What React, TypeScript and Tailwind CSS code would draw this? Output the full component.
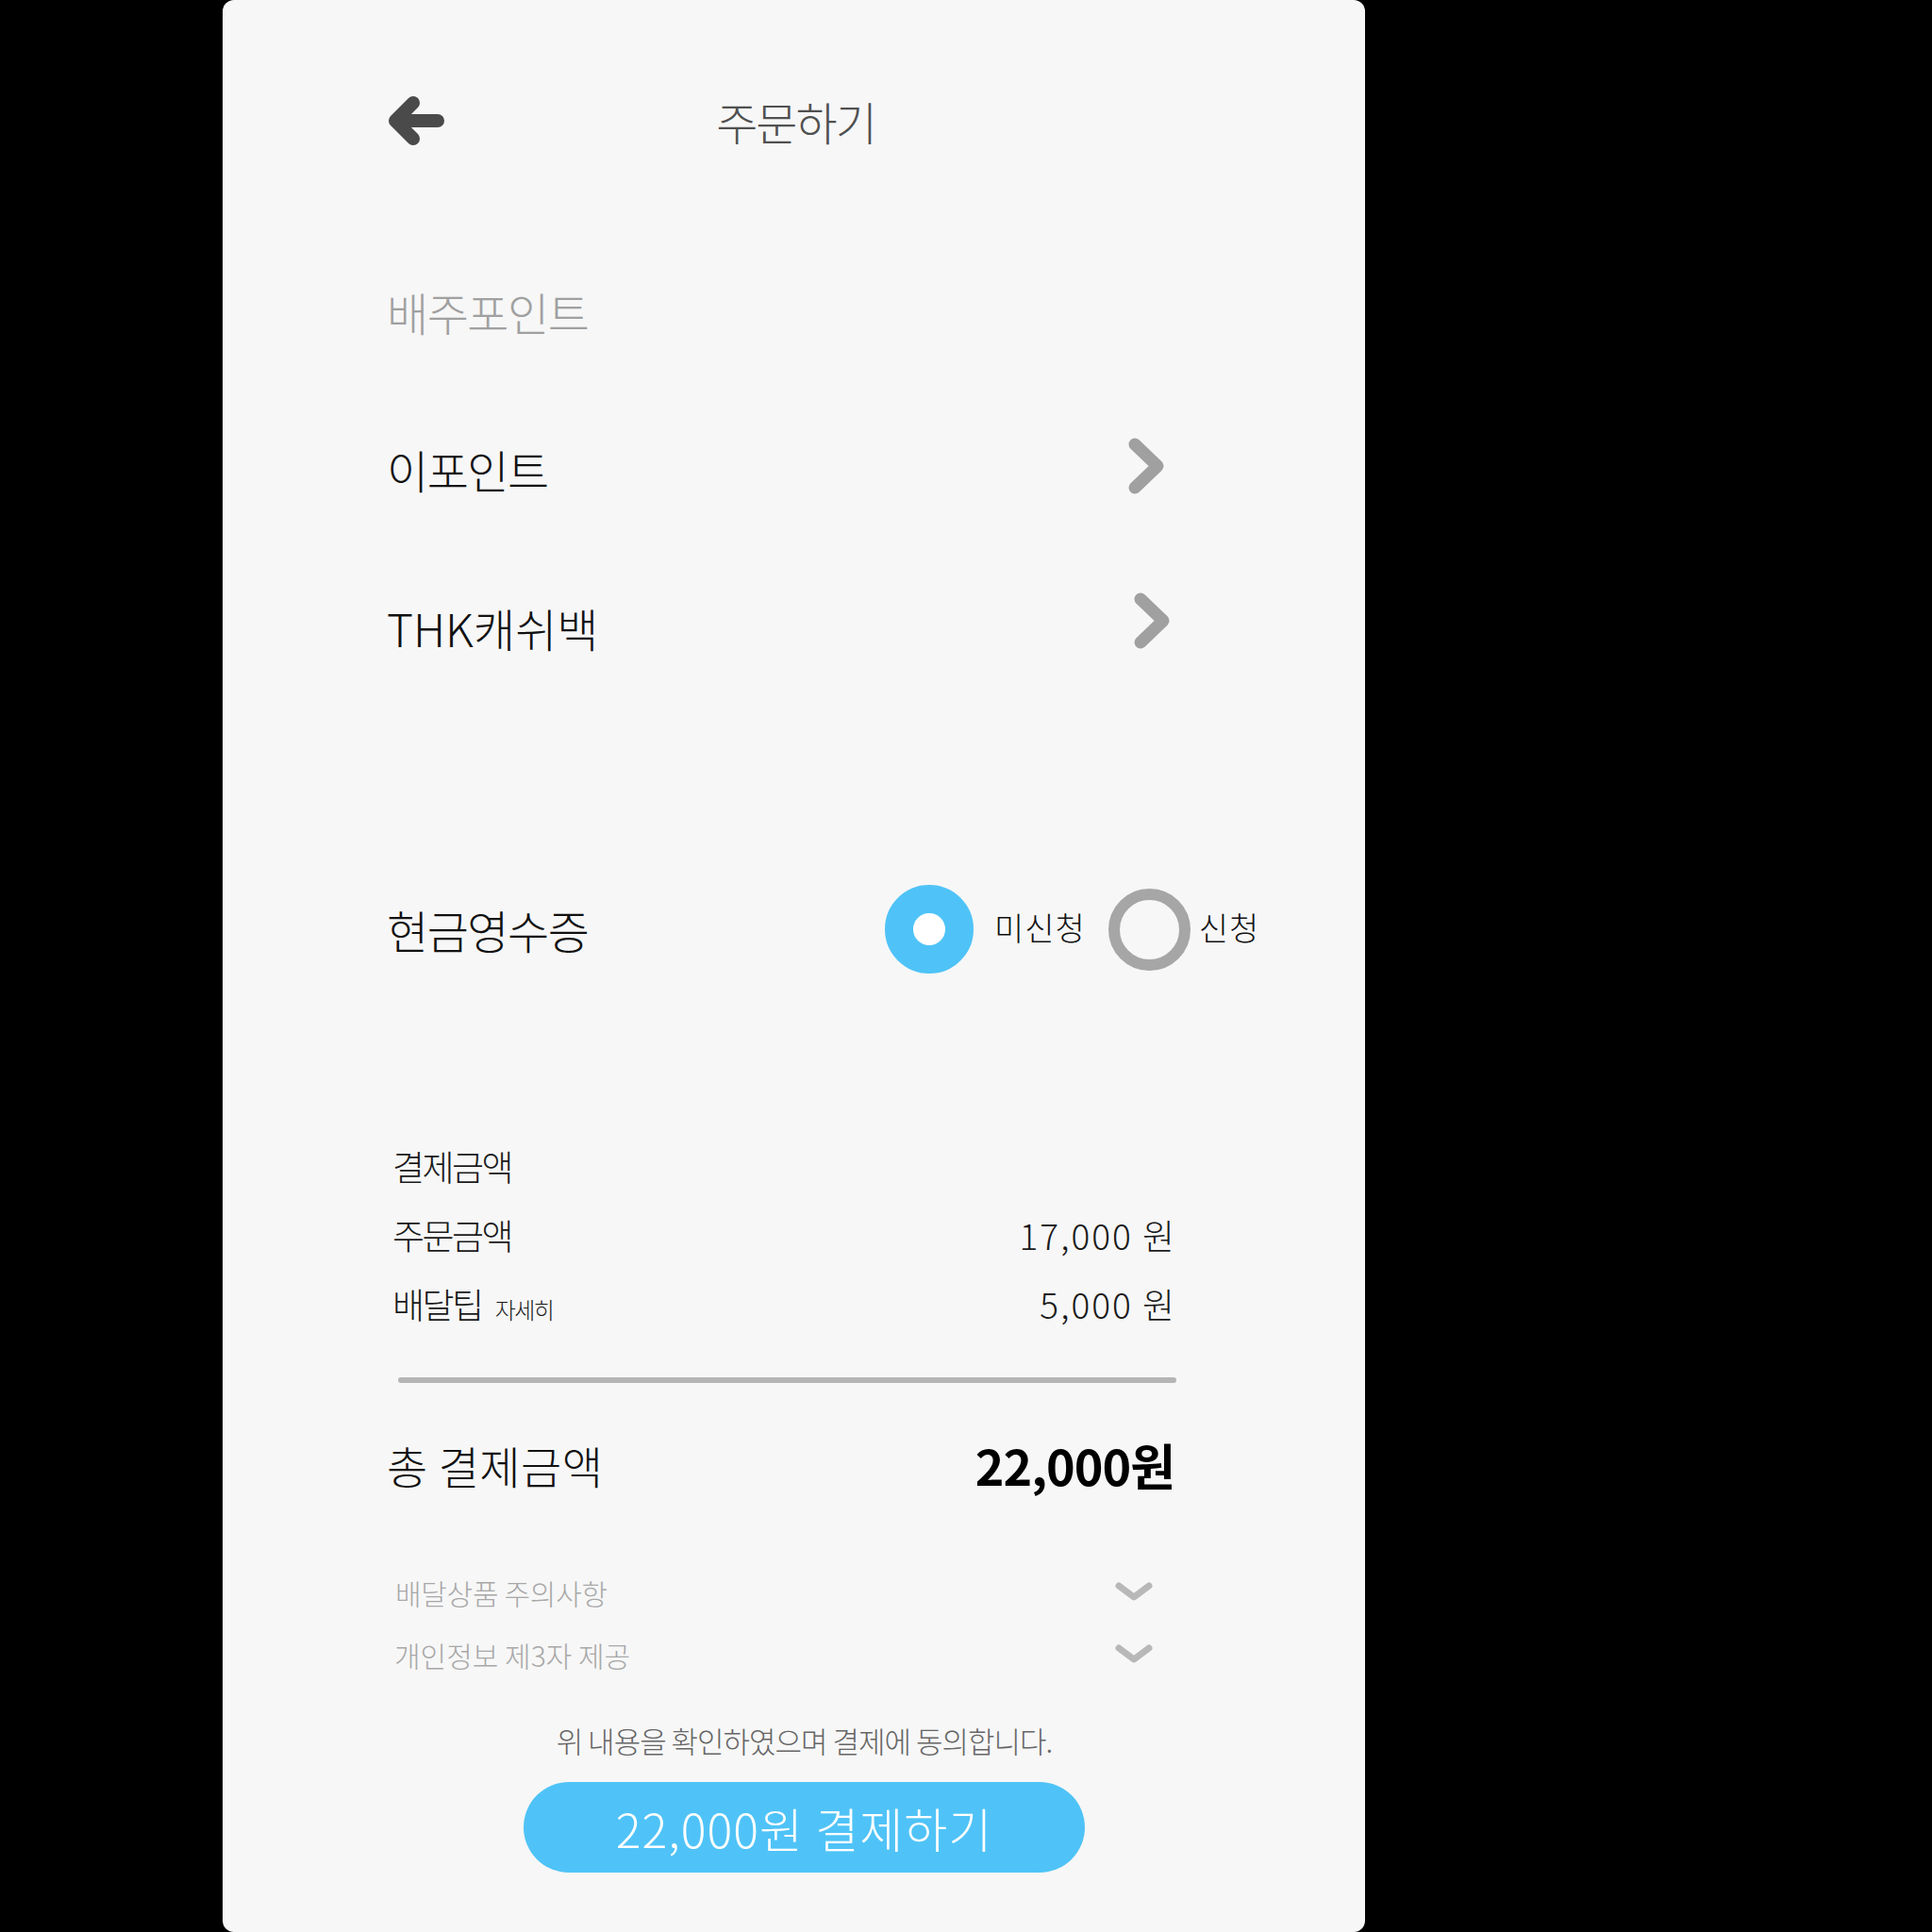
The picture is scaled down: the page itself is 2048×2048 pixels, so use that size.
const BackArrow = () => (
  <svg width="72" height="66" viewBox="0 0 72 66" fill="none">
    <path
      d="M59 33H15M33 14L14 33L33 52"
      stroke="#4a4a4a"
      strokeWidth="14"
      strokeLinecap="round"
      strokeLinejoin="round"
    />
  </svg>
);

const ChevronRight = () => (
  <svg width="44" height="62" viewBox="0 0 44 62" fill="none">
    <path
      d="M11 8L35 31L11 54"
      stroke="#a0a0a0"
      strokeWidth="13"
      strokeLinecap="round"
      strokeLinejoin="round"
    />
  </svg>
);

const ChevronDown = () => (
  <svg width="40" height="22" viewBox="0 0 40 22" fill="none">
    <path
      d="M4 4L20 16L36 4"
      stroke="#b8b8b8"
      strokeWidth="7"
      strokeLinecap="round"
      strokeLinejoin="round"
    />
  </svg>
);

const App = () => {
  return (
    <div className="w-full h-[2048px] bg-black flex font-['Noto_Sans_CJK_KR','Noto_Sans',sans-serif]">
      <div className="ml-[236px] w-[1211px] h-[2048px] bg-[#f7f7f7] rounded-[12px] flex flex-col">
        {/* header */}
        <div className="mt-[78px] h-[100px] grid grid-cols-[1fr_auto_1fr] items-center">
          <div className="pl-[169px] flex items-center">
            <BackArrow />
          </div>
          <p className="text-[48px] font-light tracking-[-2px] text-[#505050] pl-[4px]">주문하기</p>
          <div></div>
        </div>

        <div className="ml-[174px] w-[835px] flex flex-col">
          <p className="mt-[122px] h-[60px] flex items-center text-[48px] font-light tracking-[-1.5px] text-[#a0a0a0]">
            배주포인트
          </p>

          <div className="mt-[87px] h-[100px] flex items-center justify-between">
            <p className="text-[48px] font-light tracking-[-1.5px] text-[#111]">이포인트</p>
            <div className="mr-[9px] mt-[-6px]">
              <ChevronRight />
            </div>
          </div>

          <div className="mt-[68px] h-[100px] flex items-center justify-between">
            <p className="text-[48px] font-light tracking-[0px] text-[#111]">THK캐쉬백</p>
            <div className="mr-[3px] mt-[-14px]">
              <ChevronRight />
            </div>
          </div>

          {/* cash receipt */}
          <div className="mt-[220px] h-[100px] w-[980px] flex items-center">
            <p className="w-[528px] shrink-0 text-[48px] font-light tracking-[-1.5px] text-[#111]">현금영수증</p>
            <div className="flex items-center whitespace-nowrap shrink-0">
              <div className="w-[94px] h-[94px] rounded-full border-[30px] border-[#4fc3f7] bg-white"></div>
              <span className="ml-[22px] mt-[-6px] text-[34px] font-light tracking-[1px] text-[#111]">미신청</span>
              <div className="ml-[24px] w-[87px] h-[87px] rounded-full border-[12px] border-[#a6a6a6]"></div>
              <span className="ml-[9px] mt-[-6px] text-[34px] font-light tracking-[1px] text-[#111]">신청</span>
            </div>
          </div>

          {/* amounts */}
          <div className="mt-[165px] flex flex-col pl-[6px] text-[#1a1a1a]">
            <div className="h-[73px] flex items-center">
              <p className="text-[37px] font-light tracking-[-2.5px]">결제금액</p>
            </div>
            <div className="h-[73px] flex items-center justify-between">
              <p className="text-[37px] font-light tracking-[-2.5px]">주문금액</p>
              <p className="mr-[-2px] text-[37px] font-light tracking-[2px]">17,000 원</p>
            </div>
            <div className="h-[73px] flex items-center justify-between">
              <p className="text-[37px] font-light tracking-[-2.5px] flex items-baseline">
                배달팁
                <span className="ml-[14px] text-[24px] tracking-[-1.5px]">자세히</span>
              </p>
              <p className="mr-[-2px] text-[37px] font-light tracking-[2px]">5,000 원</p>
            </div>
          </div>

          <div className="mt-[41px] ml-[12px] w-[825px] h-[6px] rounded-full bg-[#b5b5b5]"></div>

          <div className="mt-[47px] h-[80px] flex items-center justify-between">
            <p className="text-[47px] font-light tracking-[0.5px] text-[#111]">총 결제금액</p>
            <p className="text-[52px] font-bold tracking-[-1px] text-black">22,000원</p>
          </div>

          <div className="mt-[65px] h-[60px] flex items-center justify-between pl-[9px] pr-[23px]">
            <p className="text-[30px] font-light tracking-[-0.3px] text-[#a8a8a8]">배달상품 주의사항</p>
            <ChevronDown />
          </div>
          <div className="mt-[6px] h-[60px] flex items-center justify-between pl-[8px] pr-[23px]">
            <p className="text-[30px] font-light tracking-[0px] text-[#a8a8a8]">개인정보 제3자 제공</p>
            <ChevronDown />
          </div>
        </div>

        {/* footer */}
        <div className="mt-[41px] flex flex-col items-center pl-[22px]">
          <p className="h-[40px] flex items-center text-[31px] font-light tracking-[-1px] text-[#666]">
            위 내용을 확인하였으며 결제에 동의합니다.
          </p>
          <button className="mt-[24px] w-[595px] h-[96px] rounded-full bg-[#4fc3f7] text-white text-[50px] font-light tracking-[1px]">
            22,000원 결제하기
          </button>
        </div>
      </div>
    </div>
  );
};

export default App;
